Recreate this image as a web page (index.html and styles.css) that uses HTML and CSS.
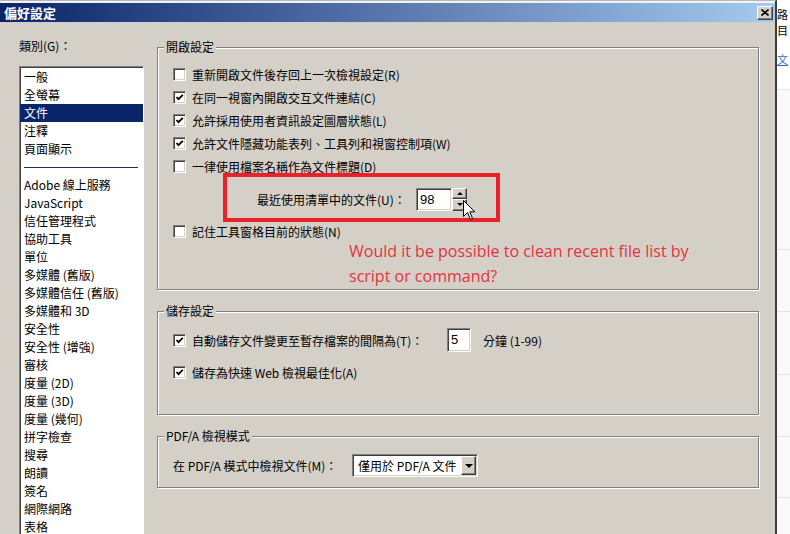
FILE: index.html
```html
<!DOCTYPE html>
<html lang="zh-Hant">
<head>
    <meta charset="UTF-8">
    <title>偏好設定</title>
    <link rel="stylesheet" href="styles.css">
</head>
<body>
    <div class="screen">
        <div class="dialog">
            <div class="titlebar">
                <span class="title">偏好設定</span>
                <span class="close-btn">
                    <svg width="8" height="7" viewBox="0 0 8 7"><path d="M0.5 0.5 L7.5 6.5 M7.5 0.5 L0.5 6.5" stroke="#000" stroke-width="1.6"/></svg>
                </span>
            </div>
            <div class="dialog-body">
                <div class="categories">
                    <div class="cat-label">類別(G)：</div>
                    <ul class="cat-list">
                        <li>一般</li>
                        <li>全螢幕</li>
                        <li class="selected">文件</li>
                        <li>注釋</li>
                        <li>頁面顯示</li>
                        <li class="separator"></li>
                        <li>Adobe 線上服務</li>
                        <li>JavaScript</li>
                        <li>信任管理程式</li>
                        <li>協助工具</li>
                        <li>單位</li>
                        <li>多媒體 (舊版)</li>
                        <li>多媒體信任 (舊版)</li>
                        <li>多媒體和 3D</li>
                        <li>安全性</li>
                        <li>安全性 (增強)</li>
                        <li>審核</li>
                        <li>度量 (2D)</li>
                        <li>度量 (3D)</li>
                        <li>度量 (幾何)</li>
                        <li>拼字檢查</li>
                        <li>搜尋</li>
                        <li>朗讀</li>
                        <li>簽名</li>
                        <li>網際網路</li>
                        <li>表格</li>
                    </ul>
                </div>

                <div class="panel">
                    <fieldset class="group group-open">
                        <legend>開啟設定</legend>
                        <div class="row"><span class="check"></span>重新開啟文件後存回上一次檢視設定(R)</div>
                        <div class="row"><span class="check checked"><svg width="9" height="9" viewBox="0 0 9 9"><path d="M1.5 4 L3.5 6.2 L7.8 1.8" fill="none" stroke="#000" stroke-width="1.8"/></svg></span>在同一視窗內開啟交互文件連結(C)</div>
                        <div class="row"><span class="check checked"><svg width="9" height="9" viewBox="0 0 9 9"><path d="M1.5 4 L3.5 6.2 L7.8 1.8" fill="none" stroke="#000" stroke-width="1.8"/></svg></span>允許採用使用者資訊設定圖層狀態(L)</div>
                        <div class="row"><span class="check checked"><svg width="9" height="9" viewBox="0 0 9 9"><path d="M1.5 4 L3.5 6.2 L7.8 1.8" fill="none" stroke="#000" stroke-width="1.8"/></svg></span>允許文件隱藏功能表列、工具列和視窗控制項(W)</div>
                        <div class="row"><span class="check"></span>一律使用檔案名稱作為文件標題(D)</div>
                        <div class="row spin-row">
                            <span class="spin-label">最近使用清單中的文件(U)：</span>
                            <span class="textbox spin-input">98</span>
                            <span class="spin-btns">
                                <span class="spin-btn up"></span>
                                <span class="spin-btn down"></span>
                            </span>
                            <span class="mark-box"></span>
                            <svg class="pointer" width="13" height="21" viewBox="0 0 13 21">
                                <path d="M0.5 0.5 L0.5 16.5 L4.5 12.5 L7.5 19.5 L9.5 18.5 L6.8 11.8 L11.8 11.8 Z" fill="#fff" stroke="#000" stroke-width="1"/>
                            </svg>
                        </div>
                        <div class="row"><span class="check"></span>記住工具窗格目前的狀態(N)</div>
                        <p class="note">Would it be possible to clean recent file list by<br>script or command?</p>
                    </fieldset>

                    <fieldset class="group group-save">
                        <legend>儲存設定</legend>
                        <div class="row">
                            <span class="check checked"><svg width="9" height="9" viewBox="0 0 9 9"><path d="M1.5 4 L3.5 6.2 L7.8 1.8" fill="none" stroke="#000" stroke-width="1.8"/></svg></span>
                            <span class="interval-label">自動儲存文件變更至暫存檔案的間隔為(T)：</span>
                            <span class="textbox minutes-box">5</span>
                            <span class="unit">分鐘 (1-99)</span>
                        </div>
                        <div class="row"><span class="check checked"><svg width="9" height="9" viewBox="0 0 9 9"><path d="M1.5 4 L3.5 6.2 L7.8 1.8" fill="none" stroke="#000" stroke-width="1.8"/></svg></span>儲存為快速 Web 檢視最佳化(A)</div>
                    </fieldset>

                    <fieldset class="group group-pdfa">
                        <legend>PDF/A 檢視模式</legend>
                        <div class="row">
                            <span class="pdfa-label">在 PDF/A 模式中檢視文件(M)：</span>
                            <span class="combo">
                                <span class="combo-text">僅用於 PDF/A 文件</span>
                                <span class="combo-btn"></span>
                            </span>
                        </div>
                    </fieldset>
                </div>
            </div>
        </div>

        <div class="behind">
            <div class="behind-text first">路</div>
            <div class="behind-text">目</div>
            <div class="behind-link">文</div>
            <div class="behind-rule r1"></div>
            <div class="behind-rule r2"></div>
            <div class="behind-rule r3"></div>
            <div class="behind-rule r4"></div>
            <div class="behind-rule r5"></div>
            <div class="behind-rule r6"></div>
        </div>
    </div>
</body>
</html>
```

FILE: styles.css
```css
* {
    box-sizing: border-box;
}

body {
    margin: 0;
    font-family: "Noto Sans CJK TC", sans-serif;
    font-size: 12px;
    color: #000;
    background: #f7f7f7;
}

.screen {
    display: flex;
    width: 790px;
    height: 534px;
    overflow: hidden;
}

/* dialog window */
.dialog {
    flex: none;
    width: 777px;
    background: #d4d0c8;
    border-top: 1px solid #b8b8b8;
    border-right: 2px solid #3c3c3c;
}

.titlebar {
    display: flex;
    align-items: center;
    justify-content: space-between;
    height: 21px;
    padding: 0 2px 0 4px;
    border-top: 2px solid #f2f2f2;
    background: linear-gradient(to right, #0a246a, #a6caf0);
}

.title {
    color: #fff;
    font-weight: bold;
    font-size: 13px;
    line-height: 19px;
}

.close-btn {
    display: flex;
    align-items: center;
    justify-content: center;
    width: 16px;
    height: 14px;
    background: #d4d0c8;
    border: 1px solid;
    border-color: #fff #404040 #404040 #fff;
    box-shadow: inset -1px -1px 0 #808080;
}

.dialog-body {
    display: flex;
}

/* category list */
.categories {
    flex: none;
    width: 150px;
    padding: 17px 0 0 19px;
}

.cat-label {
    line-height: 14px;
    margin-bottom: 13px;
}

.cat-list {
    list-style: none;
    margin: 0;
    padding: 1px 0 0;
    width: 125px;
    height: 480px;
    background: #fff;
    border: 1px solid;
    border-color: #808080 #fff #fff #808080;
    box-shadow: inset 1px 1px 0 #404040;
}

.cat-list li {
    height: 18px;
    padding-left: 4px;
    line-height: 18px;
    white-space: nowrap;
}

.cat-list .selected {
    background: #0a246a;
    color: #fff;
}

.cat-list .separator {
    padding: 9px 5px 0 4px;
}

.cat-list .separator::after {
    content: "";
    display: block;
    height: 1px;
    background: #1f2d5c;
}

/* settings panel */
.panel {
    padding: 18px 0 0 7px;
}

.group {
    width: 602px;
    min-width: 0;
    margin: 0;
    padding: 9px 0 0 15px;
    border: 1px solid #808080;
    box-shadow: inset 1px 1px 0 #fff, 1px 1px 0 #fff;
}

.group legend {
    margin-left: -9px;
    padding: 0 2px;
    line-height: 14px;
    background: #d4d0c8;
}

.row {
    display: flex;
    align-items: center;
    height: 23px;
    white-space: nowrap;
}

.check {
    flex: none;
    display: flex;
    align-items: center;
    justify-content: center;
    width: 13px;
    height: 13px;
    margin-right: 6px;
    background: #fff;
    border: 1px solid;
    border-color: #808080 #fff #fff #808080;
    box-shadow: inset 1px 1px 0 #404040, inset -1px -1px 0 #d4d0c8;
}

.textbox {
    flex: none;
    height: 23px;
    padding-left: 3px;
    line-height: 21px;
    font-family: "Liberation Sans", sans-serif;
    font-size: 13px;
    background: #fff;
    border: 1px solid;
    border-color: #808080 #fff #fff #808080;
    box-shadow: inset 1px 1px 0 #404040, inset -1px -1px 0 #d4d0c8;
}

.spin-row {
    position: relative;
    height: 42px;
    padding-left: 84px;
}

.spin-label {
    width: 159px;
}

.spin-input {
    width: 36px;
}

.spin-btns {
    display: flex;
    flex-direction: column;
    width: 15px;
    height: 23px;
}

.spin-btn {
    flex: 1;
    display: flex;
    align-items: center;
    justify-content: center;
    background: #d4d0c8;
    border: 1px solid;
    border-color: #fff #404040 #404040 #fff;
    box-shadow: inset -1px -1px 0 #808080;
}

.spin-btn::after {
    content: "";
    border-left: 3px solid transparent;
    border-right: 3px solid transparent;
}

.spin-btn.up::after {
    border-bottom: 3px solid #000;
}

.spin-btn.down::after {
    border-top: 3px solid #000;
}

/* red annotation */
.mark-box {
    position: absolute;
    left: 50px;
    top: -5px;
    width: 277px;
    height: 49px;
    border: 4px solid #e8212b;
}

.pointer {
    position: absolute;
    left: 290px;
    top: 22px;
}

.note {
    margin: -4px 0 0 176px;
    color: #e43340;
    font-family: "Open Sans", sans-serif;
    font-size: 16px;
    line-height: 25px;
    white-space: nowrap;
}

.group-save,
.group-pdfa {
    margin-top: 14px;
}

.group-save {
    padding-top: 10px;
    padding-bottom: 30px;
}

.group-save .row {
    height: 24px;
}

.group-save .row + .row {
    margin-top: 8px;
}

.interval-label {
    width: 255px;
}

.minutes-box {
    width: 24px;
    height: 24px;
    line-height: 22px;
}

.unit {
    margin-left: 12px;
}

.group-pdfa {
    padding-top: 11px;
    padding-bottom: 10px;
}

.pdfa-label {
    width: 179px;
}

.combo {
    display: flex;
    width: 126px;
    height: 23px;
    padding: 1px;
    background: #fff;
    border: 1px solid;
    border-color: #808080 #fff #fff #808080;
    box-shadow: inset 1px 1px 0 #404040, inset -1px -1px 0 #d4d0c8;
}

.combo-text {
    flex: 1;
    padding-left: 4px;
    line-height: 19px;
}

.combo-btn {
    display: flex;
    align-items: center;
    justify-content: center;
    width: 15px;
    background: #d4d0c8;
    border: 1px solid;
    border-color: #fff #404040 #404040 #fff;
    box-shadow: inset -1px -1px 0 #808080;
}

.combo-btn::after {
    content: "";
    border-left: 4px solid transparent;
    border-right: 4px solid transparent;
    border-top: 4px solid #000;
}

/* window behind the dialog */
.behind {
    flex: 1;
    overflow: hidden;
    white-space: nowrap;
    background: #fff;
    font-size: 11px;
}

.behind-text {
    line-height: 16px;
}

.behind-text.first {
    margin-top: 6px;
}

.behind-link {
    margin-top: 13px;
    line-height: 16px;
    color: #2b6fcc;
    text-decoration: underline;
}

.behind-rule {
    border-top: 1px solid #e4e4e4;
}

.r1 { margin-top: 22px; height: 160px; background: #f9f9f9; }
.r2 { height: 62px; background: #f9f9f9; }
.r3 { height: 63px; background: #f9f9f9; }
.r4 { height: 62px; background: #f9f9f9; }
.r5 { height: 61px; background: #f9f9f9; }
.r6 { height: 40px; background: #f9f9f9; }
```
